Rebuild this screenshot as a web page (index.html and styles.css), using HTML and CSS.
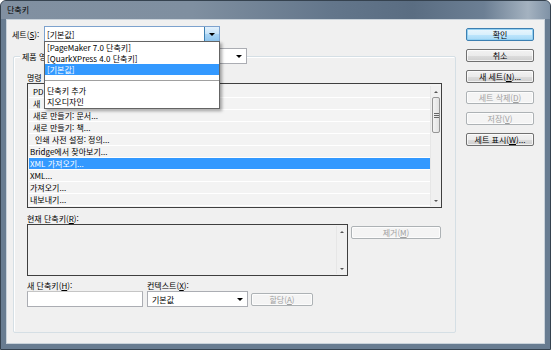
FILE: index.html
```html
<!DOCTYPE html>
<html lang="ko">
<head>
    <meta charset="UTF-8">
    <title>단축키</title>
    <link rel="stylesheet" href="styles.css">
</head>
<body>
    <div class="window">
        <div class="titlebar">단축키</div>
        <div class="client">
            <div class="main">
                <!-- set selector with its open drop-down -->
                <div class="set-row">
                    <span class="label">세트(<u>S</u>):</span>
                    <div class="combo combo-set">
                        <span class="combo-text">[기본값]</span>
                        <span class="combo-btn"><span class="arrow"></span></span>
                        <ul class="popup">
                            <li>[PageMaker 7.0 단축키]</li>
                            <li>[QuarkXPress 4.0 단축키]</li>
                            <li class="selected">[기본값]</li>
                            <li class="sep"></li>
                            <li>단축키 추가</li>
                            <li>지오디자인</li>
                        </ul>
                    </div>
                </div>

                <div class="group">
                    <div class="group-head">
                        <span class="label head-label">제품 영</span>
                        <div class="combo combo-area">
                            <span class="combo-text"></span>
                            <span class="arrow"></span>
                        </div>
                    </div>

                    <div class="label list-label">명령</div>
                    <div class="listbox">
                        <ul class="rows">
                            <li class="ind1">PD</li>
                            <li class="ind1">새</li>
                            <li class="ind1">새로 만들기: 문서...</li>
                            <li class="ind1">새로 만들기: 책...</li>
                            <li class="ind2">인쇄 사전 설정: 정의...</li>
                            <li>Bridge에서 찾아보기...</li>
                            <li class="selected">XML 가져오기...</li>
                            <li>XML...</li>
                            <li>가져오기...</li>
                            <li>내보내기...</li>
                        </ul>
                        <div class="vscroll">
                            <span class="sb-up"></span>
                            <span class="sb-thumb"><span class="grip"></span></span>
                            <span class="sb-down"></span>
                        </div>
                    </div>

                    <div class="label cur-label">현재 단축키(<u>R</u>):</div>
                    <div class="cur-row">
                        <div class="curbox">
                            <div class="curbox-body"></div>
                            <div class="vscroll small">
                                <span class="sb-up"></span>
                                <span class="sb-down"></span>
                            </div>
                        </div>
                        <button class="btn btn-remove" disabled>제거(<u>M</u>)</button>
                    </div>

                    <div class="new-grid">
                        <span class="label">새 단축키(<u>H</u>):</span>
                        <span class="label">컨텍스트(<u>X</u>):</span>
                        <span></span>
                        <div class="textbox"></div>
                        <div class="combo combo-ctx">
                            <span class="combo-text">기본값</span>
                            <span class="arrow"></span>
                        </div>
                        <button class="btn btn-assign" disabled>할당(<u>A</u>)</button>
                    </div>
                </div>
            </div>

            <div class="buttons">
                <button class="btn btn-default">확인</button>
                <button class="btn">취소</button>
                <button class="btn">새 세트(<u>N</u>)...</button>
                <button class="btn" disabled>세트 삭제(<u>D</u>)</button>
                <button class="btn" disabled>저장(<u>V</u>)</button>
                <button class="btn">세트 표시(<u>W</u>)...</button>
            </div>
        </div>
    </div>
</body>
</html>
```

FILE: styles.css
```css
/* Keyboard shortcuts dialog, Windows 7 look */
* {
    box-sizing: border-box;
}
body {
    margin: 0;
    font-family: "Noto Sans CJK KR", "Noto Sans", sans-serif;
    font-size: 8px;
    color: #000;
    background: #fff;
}
ul {
    list-style: none;
    margin: 0;
    padding: 0;
}
u {
    text-decoration: underline;
}

/* window frame */
.window {
    width: 551px;
    height: 350px;
    display: flex;
    flex-direction: column;
    padding: 0 5px 5px;
    border: 1px solid #35424f;
    border-radius: 6px 6px 0 0;
    background: #687c91;
}
.titlebar {
    height: 18px;
    margin: 0 -5px;
    padding-left: 6px;
    line-height: 18px;
    border-radius: 5px 5px 0 0;
    background: linear-gradient(90deg, #8190a1 0%, #7f8fa0 35%, #63768b 60%, #5a6d82 75%, #6c7f94 88%, #a4b2c0 96%, #7f92a6 100%);
    color: #000;
}
.client {
    flex: 1;
    display: flex;
    padding: 6px 0 0 5px;
    background: #f0f0f0;
    border: 1px solid #c9d2da;
}

/* left part */
.main {
    width: 444px;
}
.label {
    line-height: 11px;
    white-space: nowrap;
}
.set-row {
    display: flex;
    align-items: center;
    height: 16px;
}
.set-row .label {
    width: 32px;
}

.combo {
    position: relative;
    display: flex;
    align-items: center;
    height: 16px;
    background: #fff;
    border: 1px solid #abadb3;
}
.combo-text {
    flex: 1;
    padding-left: 2px;
    white-space: nowrap;
    overflow: hidden;
}
.arrow {
    width: 0;
    height: 0;
    margin-right: 4px;
    border-left: 3px solid transparent;
    border-right: 3px solid transparent;
    border-top: 3px solid #000;
}
.combo-set {
    width: 176px;
    border-color: #7da2ce;
}
.combo-btn {
    display: flex;
    align-items: center;
    justify-content: center;
    width: 15px;
    height: 100%;
    background: linear-gradient(#e3f1fc, #c4e2f8 50%, #a9d4f4 51%, #8fc6ef);
    border-left: 1px solid #3c7fb1;
}
.combo-btn .arrow {
    margin: 0;
}

/* open drop-down list */
.popup {
    position: absolute;
    top: 14px;
    left: -1px;
    width: 176px;
    height: 68px;
    background: #fff;
    border: 1px solid #646464;
    box-shadow: 2px 2px 3px rgba(0, 0, 0, 0.35);
    z-index: 5;
}
.popup li {
    height: 11px;
    line-height: 11px;
    padding-left: 2px;
    white-space: nowrap;
}
.popup li.selected {
    background: #3399ff;
    color: #fff;
}
.popup li.sep {
    height: 6px;
    border-bottom: 1px solid #a0a0a0;
}
.popup li.sep + li {
    margin-top: 4px;
}

/* group box */
.group {
    margin: 14px 0 0 1px;
    width: 443px;
    height: 277px;
    padding: 0 13px;
    border: 1px solid #d5dfe5;
    border-radius: 2px;
    box-shadow: inset 1px 1px 0 #fff;
}
.group-head {
    display: flex;
    align-items: center;
    margin: -9px 0 0 -7px;
    height: 16px;
}
.head-label {
    width: 32px;
    padding: 0 2px;
    background: #f0f0f0;
}
.combo-area {
    width: 168px;
    margin-left: 27px;
}
.list-label {
    margin-top: 8px;
}

/* command list */
.listbox {
    display: flex;
    height: 125px;
    padding: 2px 0 1px 1px;
    border: 1px solid #3f3f3f;
    background: #f3f3f3;
}
.rows {
    flex: 1;
}
.rows li {
    height: 12px;
    line-height: 11px;
    padding-left: 1px;
    border-bottom: 1px solid #fff;
    white-space: nowrap;
}
.rows li.ind1 {
    padding-left: 4px;
}
.rows li.ind2 {
    padding-left: 6px;
}
.rows li.selected {
    background: #3399ff;
    color: #fff;
}

.vscroll {
    display: flex;
    flex-direction: column;
    width: 11px;
    background: #f0f0f0;
    border-left: 1px solid #e6e6e6;
}
.sb-up,
.sb-down {
    display: flex;
    align-items: center;
    justify-content: center;
    height: 11px;
}
.sb-up::after,
.sb-down::after {
    content: "";
    border-left: 2px solid transparent;
    border-right: 2px solid transparent;
}
.sb-up::after {
    border-bottom: 2px solid #555;
}
.sb-down::after {
    border-top: 2px solid #555;
}
.sb-down {
    margin-top: auto;
}
.sb-thumb {
    display: flex;
    align-items: center;
    justify-content: center;
    height: 36px;
    margin: 0 1px;
    border: 1px solid #959595;
    border-radius: 2px;
    background: linear-gradient(90deg, #f3f3f3, #e2e2e2);
}
.grip {
    width: 5px;
    height: 5px;
    background: repeating-linear-gradient(#666 0 1px, transparent 1px 2px);
}

/* current shortcuts */
.cur-label {
    margin-top: 5px;
}
.cur-row {
    display: flex;
    align-items: flex-start;
}
.curbox {
    display: flex;
    width: 321px;
    height: 52px;
    padding: 1px;
    border: 1px solid #3f3f3f;
}
.curbox-body {
    flex: 1;
}
.vscroll.small {
    width: 10px;
}

/* buttons */
.btn {
    display: block;
    height: 13px;
    padding: 0;
    font-family: inherit;
    font-size: 8px;
    line-height: 11px;
    color: #000;
    border: 1px solid #707070;
    border-radius: 2px;
    background: linear-gradient(#f2f2f2, #ebebeb 50%, #dddddd 51%, #cfcfcf);
    box-shadow: inset 0 0 0 1px rgba(255, 255, 255, 0.7);
}
.btn:disabled {
    color: #a0a0a0;
    border-color: #adb2b5;
    background: #f4f4f4;
}
.btn-default {
    border-color: #3c7fb1;
    background: linear-gradient(#eaf6fd, #d9f0fc 50%, #bee6fd 51%, #a7d9f5);
    box-shadow: inset 0 0 0 1px #93d0f2;
}
.btn-remove {
    width: 90px;
    margin: 2px 0 0 3px;
}

/* new shortcut row */
.new-grid {
    display: grid;
    grid-template-columns: 116px 101px 62px;
    column-gap: 4px;
    margin-top: 5px;
}
.new-grid .label {
    line-height: 10px;
}
.textbox {
    height: 16px;
    background: #fff;
    border: 1px solid #abadb3;
    border-top-color: #c5c5c5;
}
.combo-ctx .combo-text {
    padding-left: 4px;
}
.btn-assign {
    width: 62px;
    margin: 2px 0 0 -1px;
}

/* right column */
.buttons {
    display: flex;
    flex-direction: column;
    gap: 8px;
    width: 68px;
    margin: 2px 0 0 10px;
}
.buttons .btn {
    width: 68px;
}
```
